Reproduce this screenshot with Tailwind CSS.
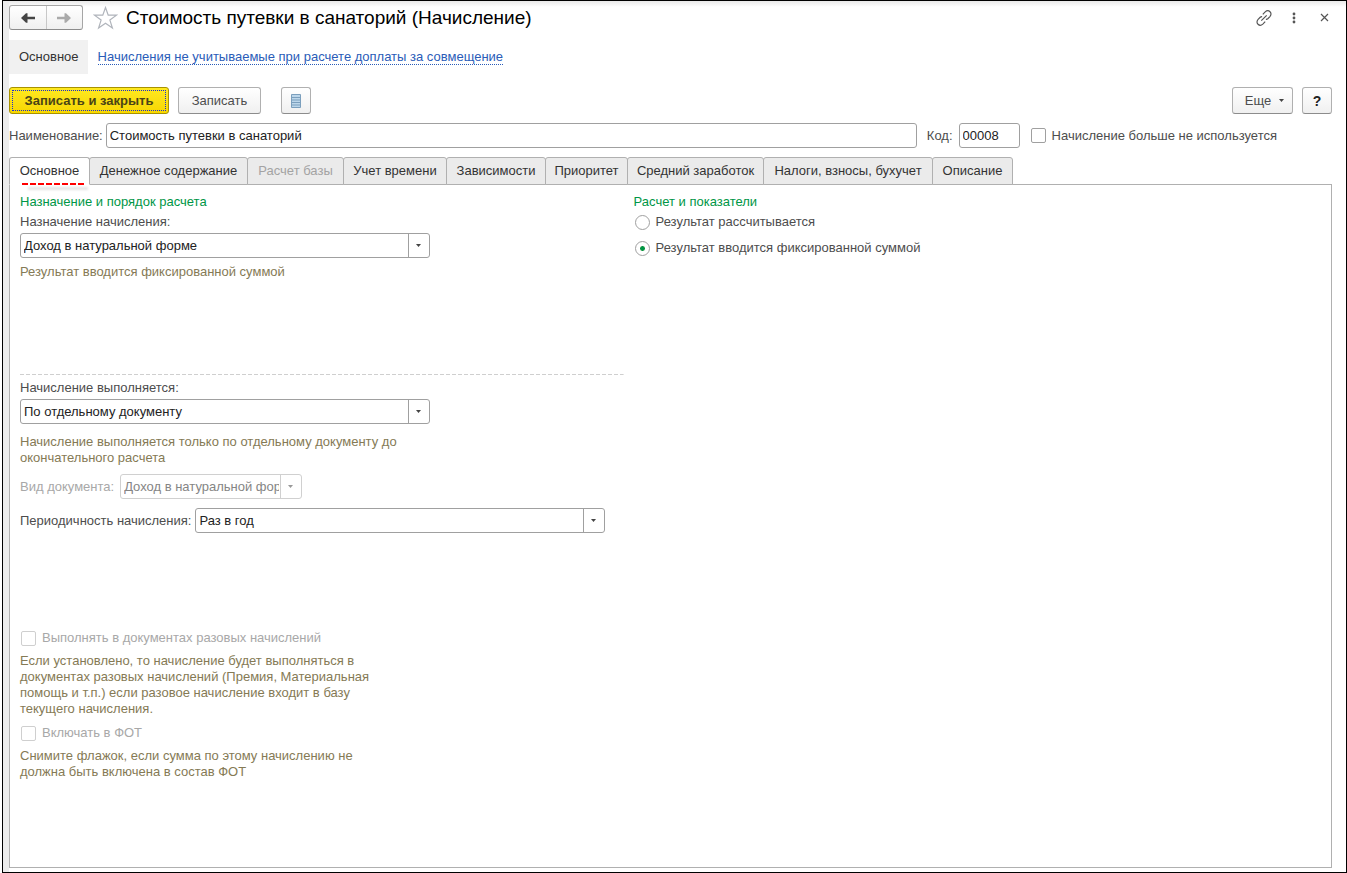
<!DOCTYPE html>
<html lang="ru">
<head>
<meta charset="utf-8">
<meta name="viewport" content="width=device-width, initial-scale=1">
<title>Стоимость путевки в санаторий (Начисление)</title>
<script src="https://cdn.jsdelivr.net/npm/@tailwindcss/browser@4"></script>
</head>
<body class="bg-white pl-[2px] font-['Liberation_Sans',Arial,sans-serif] text-[13px] leading-4 text-[#4d4d4d]">
<main class="flex min-h-screen flex-col border border-black bg-white">
  <div class="flex flex-1 flex-col border-l-6 border-[#ececec] bg-linear-to-b from-[#e9e9e9] to-white to-[6px] pr-3.5 pb-1">

    <header class="flex items-center pt-1">
      <div class="flex h-[25px] w-[74px] rounded-[3px] border border-[#a6a6a6] border-b-[#8c8c8c] bg-linear-to-b from-white to-[#f0f0f0]">
        <button type="button" aria-label="Назад" class="flex flex-1 items-center justify-center border-r border-[#c8c8c8]">
          <svg width="14" height="10" viewBox="0 0 14 10"><path fill="#444" d="M0 5L5 .3h1.500V3.700H14v2.600H6.500V9.700H5z"/></svg>
        </button>
        <button type="button" aria-label="Вперед" class="flex flex-1 items-center justify-center">
          <svg width="14" height="10" viewBox="0 0 14 10"><path fill="#aaa" d="M14 5L9 .3H7.500V3.700H0v2.600h7.500V9.700H9z"/></svg>
        </button>
      </div>
      <button type="button" aria-label="В избранное" class="ml-2.5">
        <svg width="25" height="24" viewBox="0 0 25 24" fill="#fff" stroke="#b0b4bb" stroke-width="1.200"><path d="M12.500 1.500l2.700 7.700h8.300l-6.600 4.900 2.500 7.900-6.900-4.800-6.900 4.800 2.500-7.900L1.500 9.200h8.300z"/></svg>
      </button>
      <h1 class="ml-2 flex-1 text-[19px] leading-6 text-black">Стоимость путевки в санаторий (Начисление)</h1>
      <div class="flex items-center">
        <button type="button" aria-label="Ссылка" class="flex h-6 w-[30px] items-center justify-center">
          <svg width="16" height="16" viewBox="0 0 16 16" fill="none" stroke="#555" stroke-width="1.200"><path d="M5.300 10.700l5.400-5.400M6.800 4.300l2.400-2.400c1.500-1.400 3.400-1.500 4.800-.2s1.300 3.400-.1 4.900l-2.100 2.100c-.6.500-1.200.7-1.900.6M9.200 11.700l-2.400 2.400c-1.500 1.400-3.400 1.500-4.800.2s-1.300-3.400.1-4.900l2.100-2.100c.6-.5 1.200-.7 1.900-.6"/></svg>
        </button>
        <button type="button" aria-label="Меню" class="flex h-6 w-[30px] items-center justify-center">
          <svg width="4" height="12" viewBox="0 0 4 12" fill="#555"><circle cx="2" cy="2" r="1.400"/><circle cx="2" cy="6" r="1.400"/><circle cx="2" cy="10" r="1.400"/></svg>
        </button>
        <button type="button" aria-label="Закрыть" class="-mr-[7px] flex h-6 w-[30px] items-center justify-center">
          <svg width="9" height="9" viewBox="0 0 9 9" fill="none" stroke="#555" stroke-width="1.200"><path d="M1 1l7 7M8 1L1 8"/></svg>
        </button>
      </div>
    </header>

    <nav class="mt-2.5 flex items-center gap-2.5">
      <span class="bg-[#f1f1f1] py-[9px] pr-[9px] pl-2.5 text-[#333]">Основное</span>
      <a href="#" class="border-b border-dotted border-[#2a5cb8] leading-[14px] text-[#2a5cb8]">Начисления не учитываемые при расчете доплаты за совмещение</a>
    </nav>

    <div class="mt-[13px] flex items-center">
      <button type="button" class="h-[27px] w-40 rounded-[3px] border border-[#a89200] bg-linear-to-b from-[#ffe91f] to-[#f7d600] p-0.5 font-bold text-[#4a4416]"><span class="flex h-full items-center justify-center border border-dotted border-[#1a2fd0]">Записать и закрыть</span></button>
      <button type="button" class="ml-[9px] h-[27px] w-[83px] rounded-[3px] border border-[#b0b0b0] border-b-[#8c8c8c] bg-linear-to-b from-white to-[#f0f0f0]">Записать</button>
      <button type="button" aria-label="Список" class="ml-5 flex h-[27px] w-[30px] items-center justify-center rounded-[3px] border border-[#b0b0b0] border-b-[#8c8c8c] bg-linear-to-b from-white to-[#f0f0f0]">
        <svg width="10" height="14" viewBox="0 0 10 14"><path fill="#bcd6ea" stroke="#7b9fbd" d="M.5.500h9v13h-9z"/><path stroke="#7b9fbd" d="M1 3.500h8M1 6h8M1 8.500h8M1 11h8"/></svg>
      </button>
      <button type="button" class="ml-auto flex h-[27px] w-[61px] items-center justify-center gap-2 rounded-[3px] border border-[#b0b0b0] border-b-[#8c8c8c] bg-linear-to-b from-white to-[#f0f0f0] pl-1">Еще
        <svg width="5" height="3" viewBox="0 0 5 3" fill="#444"><path d="M0 0h5L2.500 3z"/></svg>
      </button>
      <button type="button" aria-label="Справка" class="ml-[9px] h-[27px] w-[30px] rounded-[3px] border border-[#b0b0b0] border-b-[#8c8c8c] bg-linear-to-b from-white to-[#f0f0f0] text-sm font-bold text-[#222]">?</button>
    </div>

    <div class="mt-[9px] flex items-center">
      <label for="name">Наименование:</label>
      <input id="name" type="text" value="Стоимость путевки в санаторий" class="ml-[3px] h-[25px] min-w-0 flex-1 rounded-[3px] border border-[#a0a0a0] bg-white px-[3px] text-[#222]">
      <label for="code" class="ml-2.5">Код:</label>
      <input id="code" type="text" value="00008" class="ml-1.5 h-[25px] w-[61px] rounded-[3px] border border-[#a0a0a0] bg-white px-[3px] text-[#222]">
      <input id="unused" type="checkbox" class="ml-[11px] size-[15px] appearance-none rounded-[2px] border border-[#a0a0a0] bg-white checked:bg-[#009646]">
      <label for="unused" class="mr-[55px] ml-1.5">Начисление больше не используется</label>
    </div>

    <div role="tablist" class="relative z-10 mt-[9px] -mb-px flex items-end text-[#333]">
      <button type="button" role="tab" aria-selected="true" class="relative h-7 w-[81px] rounded-t-[3px] border border-b-white border-[#b0b0b0] bg-white">Основное
        <span class="absolute top-[25px] left-3 h-[2px] w-[62px] bg-[repeating-linear-gradient(90deg,#f00_0_6px,transparent_6px_8px)]"></span>
        <span class="absolute top-[29px] left-[18px] h-[3px] w-[60px] bg-black/10 blur-[1px]"></span>
      </button>
      <button type="button" role="tab" class="-ml-px h-7 w-[159px] rounded-t-[3px] border border-[#b0b0b0] bg-[#ebebeb]">Денежное содержание</button>
      <button type="button" role="tab" disabled class="-ml-px h-7 w-[97px] rounded-t-[3px] border border-[#b0b0b0] bg-[#ebebeb] text-[#a3a3a3]">Расчет базы</button>
      <button type="button" role="tab" class="-ml-px h-7 w-[104px] rounded-t-[3px] border border-[#b0b0b0] bg-[#ebebeb]">Учет времени</button>
      <button type="button" role="tab" class="-ml-px h-7 w-[100px] rounded-t-[3px] border border-[#b0b0b0] bg-[#ebebeb]">Зависимости</button>
      <button type="button" role="tab" class="-ml-px h-7 w-[83px] rounded-t-[3px] border border-[#b0b0b0] bg-[#ebebeb]">Приоритет</button>
      <button type="button" role="tab" class="-ml-px h-7 w-[137px] rounded-t-[3px] border border-[#b0b0b0] bg-[#ebebeb]">Средний заработок</button>
      <button type="button" role="tab" class="-ml-px h-7 w-[170px] rounded-t-[3px] border border-[#b0b0b0] bg-[#ebebeb]">Налоги, взносы, бухучет</button>
      <button type="button" role="tab" class="-ml-px h-7 w-[81px] rounded-t-[3px] border border-[#b0b0b0] bg-[#ebebeb]">Описание</button>
    </div>

    <div role="tabpanel" class="grid flex-1 grid-cols-[36fr_41fr] gap-2.5 border border-[#b0b0b0] bg-white px-2.5 pt-[9px]">
      <section>
        <h2 class="text-[#009646]">Назначение и порядок расчета</h2>
        <label for="purpose" class="mt-1 block">Назначение начисления:</label>
        <div class="relative mt-[3px] h-[25px] w-[410px]">
          <select id="purpose" class="size-full appearance-none rounded-[3px] border border-[#a0a0a0] bg-white pr-[22px] pl-[3px] text-[#222]"><option>Доход в натуральной форме</option></select>
          <span class="pointer-events-none absolute inset-y-0 right-0 flex w-[22px] items-center justify-center border-l border-[#a0a0a0] pr-0.5"><svg width="5" height="3" viewBox="0 0 5 3" fill="#444"><path d="M0 0h5L2.500 3z"/></svg></span>
        </div>
        <p class="mt-1.5 min-h-[110px] text-[#857a55]">Результат вводится фиксированной суммой</p>
        <svg class="block h-px w-full" aria-hidden="true"><line x1="0" y1="0.500" x2="100%" y2="0.500" stroke="#cfcfcf" stroke-dasharray="4 2"/></svg>
        <label for="mode" class="mt-[5px] block">Начисление выполняется:</label>
        <div class="relative mt-[3px] h-[25px] w-[410px]">
          <select id="mode" class="size-full appearance-none rounded-[3px] border border-[#a0a0a0] bg-white pr-[22px] pl-[3px] text-[#222]"><option>По отдельному документу</option></select>
          <span class="pointer-events-none absolute inset-y-0 right-0 flex w-[22px] items-center justify-center border-l border-[#a0a0a0] pr-0.5"><svg width="5" height="3" viewBox="0 0 5 3" fill="#444"><path d="M0 0h5L2.500 3z"/></svg></span>
        </div>
        <p class="mt-2.5 max-w-[410px] text-[#857a55]">Начисление выполняется только по отдельному документу до<br>окончательного расчета</p>
        <div class="mt-2 flex items-center gap-1.5">
          <label for="doctype" class="text-[#a8a8a8]">Вид документа:</label>
          <div class="relative h-[25px] w-[182px]">
            <select id="doctype" disabled class="size-full appearance-none rounded-[3px] border border-[#d0d0d0] bg-white pr-[22px] pl-[3px] text-[#858585] opacity-100"><option>Доход в натуральной форме</option></select>
            <span class="pointer-events-none absolute inset-y-0 right-0 flex w-[22px] items-center justify-center border-l border-[#d0d0d0] pr-0.5"><svg width="5" height="3" viewBox="0 0 5 3" fill="#999"><path d="M0 0h5L2.500 3z"/></svg></span>
          </div>
        </div>
        <div class="mt-[9px] flex items-center gap-1">
          <label for="period">Периодичность начисления:</label>
          <div class="relative h-[25px] w-[410px]">
            <select id="period" class="size-full appearance-none rounded-[3px] border border-[#a0a0a0] bg-white pr-[22px] pl-[3px] text-[#222]"><option>Раз в год</option></select>
            <span class="pointer-events-none absolute inset-y-0 right-0 flex w-[22px] items-center justify-center border-l border-[#a0a0a0] pr-0.5"><svg width="5" height="3" viewBox="0 0 5 3" fill="#444"><path d="M0 0h5L2.500 3z"/></svg></span>
          </div>
        </div>
        <div class="mt-[97px] flex items-center gap-1.5 pl-px">
          <input id="onetime" type="checkbox" disabled class="size-[15px] appearance-none rounded-[2px] border border-[#cfcfcf] bg-white">
          <label for="onetime" class="text-[#a8a8a8]">Выполнять в документах разовых начислений</label>
        </div>
        <p class="mt-[7px] text-[#857a55]">Если установлено, то начисление будет выполняться в<br>документах разовых начислений (Премия, Материальная<br>помощь и т.п.) если разовое начисление входит в базу<br>текущего начисления.</p>
        <div class="mt-2 flex items-center gap-1.5 pl-px">
          <input id="fot" type="checkbox" disabled class="size-[15px] appearance-none rounded-[2px] border border-[#cfcfcf] bg-white">
          <label for="fot" class="text-[#a8a8a8]">Включать в ФОТ</label>
        </div>
        <p class="mt-[7px] text-[#857a55]">Снимите флажок, если сумма по этому начислению не<br>должна быть включена в состав ФОТ</p>
      </section>

      <fieldset>
        <legend class="text-[#009646]">Расчет и показатели</legend>
        <div class="mt-1 flex items-center gap-1.5 pl-px">
          <input id="calc" name="result" type="radio" class="size-[15px] appearance-none rounded-full border border-[#a0a0a0] bg-white checked:bg-radial checked:from-[#009646] checked:from-[2px] checked:to-white checked:to-[3px]">
          <label for="calc">Результат рассчитывается</label>
        </div>
        <div class="mt-2.5 flex items-center gap-1.5 pl-px">
          <input id="fixed" name="result" type="radio" checked class="size-[15px] appearance-none rounded-full border border-[#a0a0a0] bg-white checked:bg-radial checked:from-[#009646] checked:from-[2px] checked:to-white checked:to-[3px]">
          <label for="fixed">Результат вводится фиксированной суммой</label>
        </div>
      </fieldset>
    </div>
  </div>
</main>
</body>
</html>
